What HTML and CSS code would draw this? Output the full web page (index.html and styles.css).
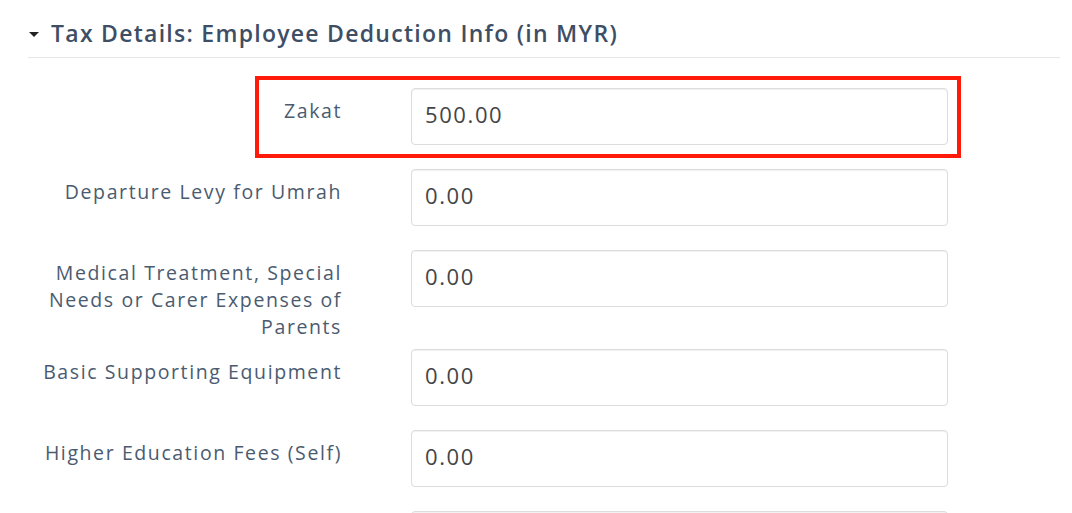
FILE: index.html
```html
<!DOCTYPE html>
<html>
<head>
<meta charset="utf-8">
<link rel="stylesheet" href="styles.css">
</head>
<body>
<div class="section">
  <div class="section-head">
    <span class="caret"></span>
    <h2 class="section-title">Tax Details: Employee Deduction Info (in MYR)</h2>
  </div>
  <div class="form">
    <div class="row highlight">
      <label class="label">Zakat</label>
      <div class="input">500.00</div>
    </div>
    <div class="row">
      <label class="label">Departure Levy for Umrah</label>
      <div class="input">0.00</div>
    </div>
    <div class="row">
      <label class="label">Medical Treatment, Special Needs or Carer Expenses of Parents</label>
      <div class="input">0.00</div>
    </div>
    <div class="row">
      <label class="label">Basic Supporting Equipment</label>
      <div class="input">0.00</div>
    </div>
    <div class="row">
      <label class="label">Higher Education Fees (Self)</label>
      <div class="input">0.00</div>
    </div>
    <div class="row">
      <label class="label"></label>
      <div class="input"></div>
    </div>
  </div>
</div>
</body>
</html>
```
FILE: styles.css
```css
html, body {
  margin: 0;
  padding: 0;
  background: #ffffff;
  overflow: hidden;
}
body {
  font-family: "Open Sans", "DejaVu Sans", sans-serif;
}
.section {
  padding: 19px 12px 0 28px;
}
.section-head {
  display: flex;
  align-items: center;
  height: 28px;
  padding-bottom: 10px;
  border-bottom: 1px solid #e6e6e6;
}
.caret {
  width: 0;
  height: 0;
  margin-top: 2px;
  margin-left: 1px;
  margin-right: 12px;
  border-left: 5.5px solid transparent;
  border-right: 5.5px solid transparent;
  border-top: 5px solid #222;
}
.section-title {
  margin: 0;
  font-size: 23px;
  font-weight: 600;
  letter-spacing: 1.27px;
  color: #3e4e64;
  line-height: 28px;
  white-space: nowrap;
}
.form {
  padding-top: 30px;
}
.row {
  display: grid;
  grid-template-columns: 314px 537px;
  column-gap: 69px;
  align-items: start;
  margin-bottom: 24px;
}
.label {
  text-align: right;
  padding-top: 9px;
  padding-left: 10px;
  font-size: 19.5px;
  line-height: 27px;
  letter-spacing: 1.6px;
  color: #4a5b70;
  margin-bottom: -15px;
}
.input {
  box-sizing: border-box;
  height: 57px;
  border: 1px solid #dcdcdc;
  border-radius: 4px;
  box-shadow: inset 0 1px 1px rgba(0,0,0,0.06);
  padding: 11px 13px;
  font-size: 22px;
  line-height: 28px;
  letter-spacing: 1.6px;
  color: #454545;
}
.highlight {
  position: relative;
}
.highlight::after {
  content: "";
  position: absolute;
  left: 227px;
  top: -12px;
  width: 698px;
  height: 74px;
  border: 4px solid #ff1a0a;
  pointer-events: none;
}
```
